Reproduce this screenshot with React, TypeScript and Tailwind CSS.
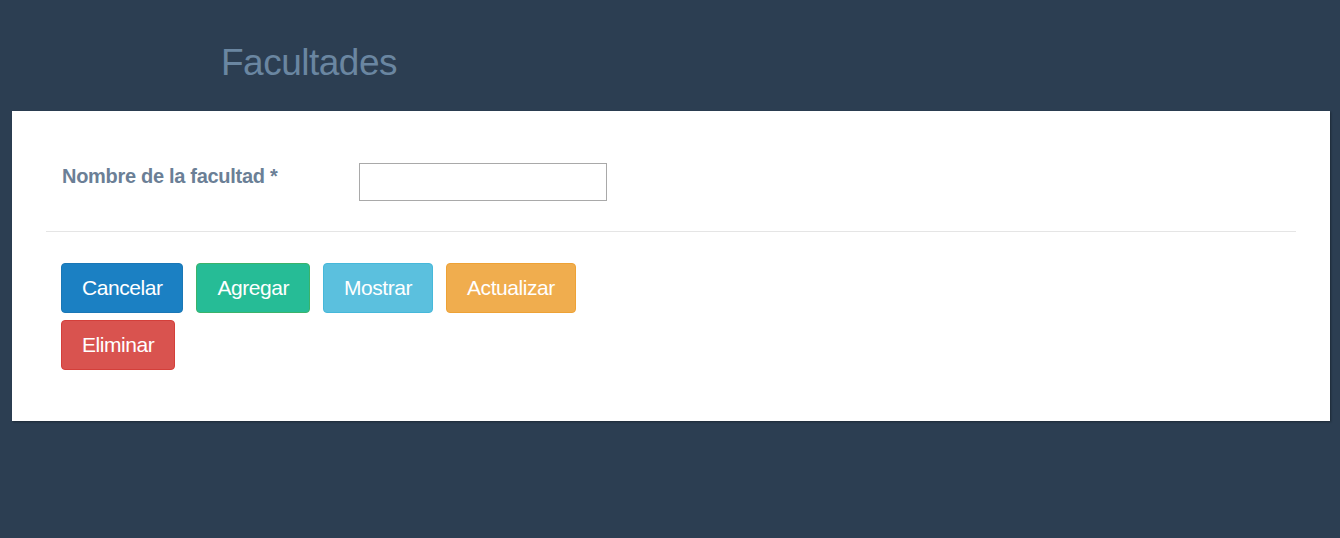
const buttons = [
    { label: "Cancelar", cls: "bg-[#1b80c3] border-[#1a77b6]" },
    { label: "Agregar", cls: "bg-[#26bc96] border-[#3bb36a]" },
    { label: "Mostrar", cls: "bg-[#5bc0de] border-[#46b8da]" },
    { label: "Actualizar", cls: "bg-[#f0ad4e] border-[#eea236]" },
    { label: "Eliminar", cls: "bg-[#d9534f] border-[#d43f3a]" },
];

export default function App() {
    return (
        <div className="min-h-[538px] w-full bg-[#2c3e52] font-['Liberation_Sans',Arial,sans-serif]">
            <header className="h-[111px] pt-[42px] pl-[221px]">
                <h1 className="text-[37px] leading-[42px] tracking-[-0.5px] text-[#6a86a1]">Facultades</h1>
            </header>

            <main className="ml-[12px] mr-[10px] bg-white pt-[52px] pb-[51px] px-[34px] shadow-[1px_1px_2px_rgba(0,0,0,0.35)]">
                <div className="flex items-start">
                    <label className="w-[313px] pl-[16px] pt-[2px] text-[20px] leading-[23px] tracking-[-0.3px] font-bold text-[#6b7f96]">
                        Nombre de la facultad *
                    </label>
                    <input type="text" className="w-[248px] h-[38px] border border-[#a9a9a9] bg-white outline-none px-2" />
                </div>

                <div className="mt-[30px] border-t border-[#e5e5e5]" />

                <div className="mt-[31px] pl-[15px] w-[600px] flex flex-wrap gap-x-[13px] gap-y-[7px]">
                    {buttons.map((b) => (
                        <button
                            key={b.label}
                            className={`h-[50px] px-[20px] pb-[2px] border rounded-[4px] text-white text-[21px] tracking-[-0.45px] leading-none ${b.cls}`}
                        >
                            {b.label}
                        </button>
                    ))}
                </div>
            </main>
        </div>
    );
}
